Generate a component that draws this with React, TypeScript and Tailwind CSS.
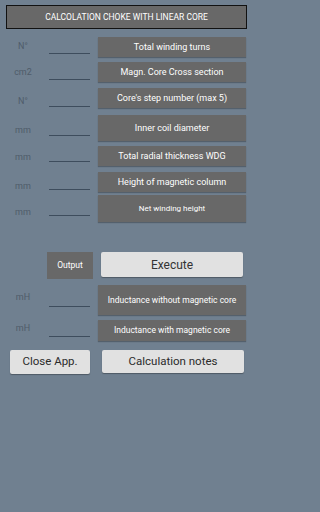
import React from 'react';

type InputRow = {
    unit: string;
    title: string;
    rowClass: string;
    labelClass: string;
    lineClass: string;
    textClass: string;
};

// each row: margin to the row above, height, label/underline offsets
const inputRows: InputRow[] = [
    { unit: 'N°', title: 'Total winding turns', rowClass: 'mt-[8px] h-[20px]', labelClass: 'pt-[5px]', lineClass: 'pb-[3px]', textClass: 'text-[9px]' },
    { unit: 'cm2', title: 'Magn. Core Cross section', rowClass: 'mt-[5px] h-[20px]', labelClass: 'pt-[6px]', lineClass: 'pb-[2px]', textClass: 'text-[9px]' },
    { unit: 'N°', title: "Core's step number (max 5)", rowClass: 'mt-[6px] h-[20px]', labelClass: 'pt-[9px]', lineClass: 'pb-[1px]', textClass: 'text-[9px]' },
    { unit: 'mm', title: 'Inner coil diameter', rowClass: 'mt-[7px] h-[26px]', labelClass: 'pt-[11px]', lineClass: 'pb-[5px]', textClass: 'text-[9px]' },
    { unit: 'mm', title: 'Total radial thickness WDG', rowClass: 'mt-[5px] h-[20px]', labelClass: 'pt-[7px]', lineClass: 'pb-[4px]', textClass: 'text-[9px]' },
    { unit: 'mm', title: 'Height of magnetic column', rowClass: 'mt-[6px] h-[20px]', labelClass: 'pt-[10px]', lineClass: 'pb-[2px]', textClass: 'text-[9px]' },
    { unit: 'mm', title: 'Net winding height', rowClass: 'mt-[3px] h-[27px]', labelClass: 'pt-[13px]', lineClass: 'pb-[6px]', textClass: 'text-[8px]' },
];

const outputRows: InputRow[] = [
    { unit: 'mH', title: 'Inductance without magnetic core', rowClass: 'mt-[6px] h-[30px]', labelClass: 'pt-[8px]', lineClass: 'pb-[8px]', textClass: 'text-[8.5px]' },
    { unit: 'mH', title: 'Inductance with magnetic core', rowClass: 'mt-[5px] h-[21px]', labelClass: 'pt-[4px]', lineClass: 'pb-[4px]', textClass: 'text-[8.5px]' },
];

function FieldRow({ row }: { row: InputRow }) {
    return (
        <div className={`flex ${row.rowClass}`}>
            <div className={`w-[46px] text-center text-[9px] leading-none text-[#4f5c6a] ${row.labelClass}`}>{row.unit}</div>
            <div className={`ml-[3px] flex w-[41px] items-end ${row.lineClass}`}>
                <div className="h-px w-full bg-[#3e4d5d]" />
            </div>
            <div className={`ml-[8px] flex w-[148px] items-center justify-center bg-[#686868] leading-none text-white shadow-[0_1px_1px_rgba(0,0,0,0.25)] ${row.textClass}`}>
                {row.title}
            </div>
        </div>
    );
}

export default function App() {
    return (
        <div className="min-h-[512px] w-full bg-[#708090]">
            <div className="flex h-[512px] w-[259px] flex-col font-['Roboto','Liberation_Sans',sans-serif]">
                {/* Title */}
                <div className="ml-[6px] mt-[5px] flex h-[24px] w-[241px] items-center justify-center border border-b-[1.5px] border-r-[1.5px] border-[#111] bg-[#686868] text-[8.5px] leading-none text-white">
                    CALCOLATION CHOKE WITH LINEAR CORE
                </div>

                {inputRows.map((row, i) => <FieldRow key={i} row={row} />)}

                {/* Output / Execute */}
                <div className="mt-[30px] flex h-[27px]">
                    <div className="ml-[47px] flex w-[46px] items-center justify-center bg-[#686868] text-[8.5px] leading-none text-white">Output</div>
                    <button className="ml-[8px] flex h-[25px] w-[142px] items-center justify-center rounded-[2px] bg-[#e1e1e1] text-[12px] leading-none text-[#333] shadow-[0_1px_1px_rgba(0,0,0,0.3)]">
                        Execute
                    </button>
                </div>

                {outputRows.map((row, i) => <FieldRow key={i} row={row} />)}

                <div className="mt-[9px] flex h-[24px]">
                    <button className="ml-[10px] flex w-[80px] items-center justify-center rounded-[2px] bg-[#e1e1e1] text-[11.5px] leading-none text-[#2b2b2b] shadow-[0_1px_1px_rgba(0,0,0,0.3)]">
                        Close App.
                    </button>
                    <button className="ml-[12px] flex h-[23px] w-[142px] items-center justify-center rounded-[2px] bg-[#e1e1e1] text-[11.5px] leading-none text-[#2b2b2b] shadow-[0_1px_1px_rgba(0,0,0,0.3)]">
                        Calculation notes
                    </button>
                </div>
            </div>
        </div>
    );
}
